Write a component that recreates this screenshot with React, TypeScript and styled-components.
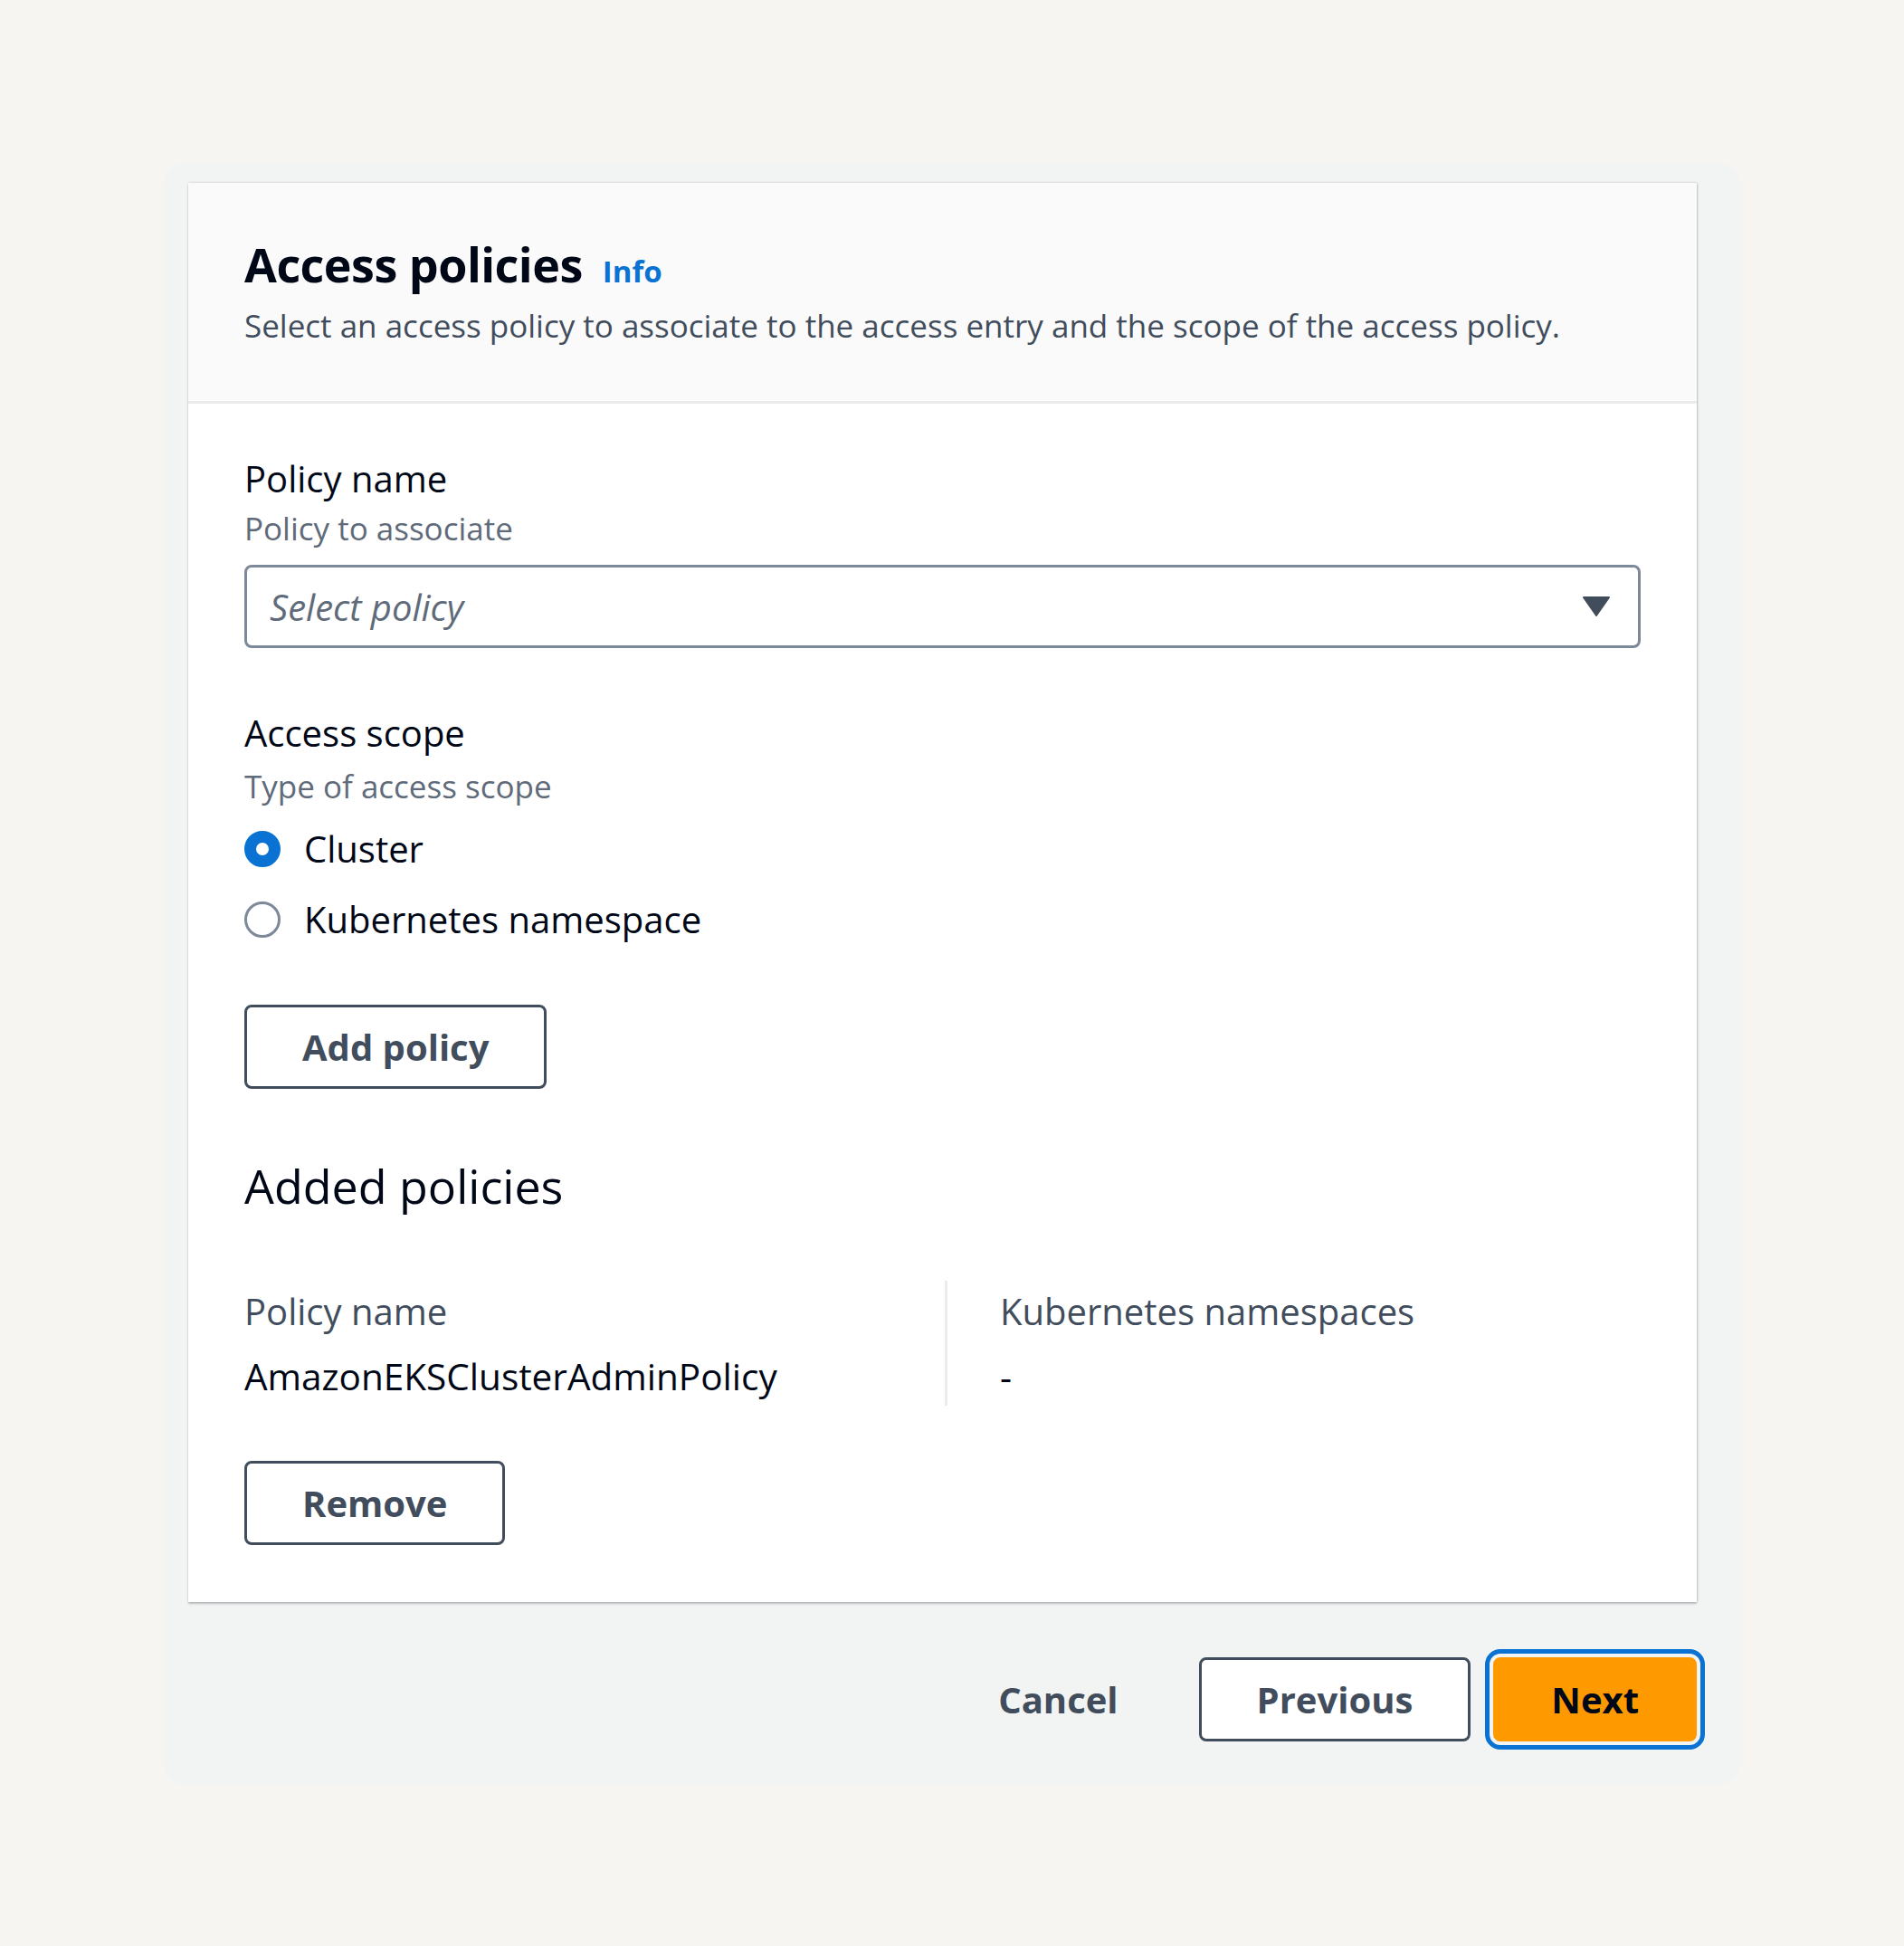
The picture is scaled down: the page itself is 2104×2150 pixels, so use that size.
import React, { useState } from "react";
import styled, { createGlobalStyle } from "styled-components";

const GlobalStyle = createGlobalStyle`
  body {
    margin: 0;
    background: #f7f5f1;
    font-family: "Open Sans", "Noto Sans", sans-serif;
    color: #000716;
  }
  * { box-sizing: border-box; }
`;

type Scope = "cluster" | "namespace";

export default function App() {
  const [scope, setScope] = useState<Scope>("cluster");

  return (
    <Page>
      <GlobalStyle />
      <Frame>
        <Card>
          <CardHeader>
            <TitleRow>
              <Title>Access policies</Title>
              <InfoLink href="#">Info</InfoLink>
            </TitleRow>
            <HeaderDescription>
              Select an access policy to associate to the access entry and the scope of the access policy.
            </HeaderDescription>
          </CardHeader>

          <CardBody>
            <Field>
              <FieldLabel>Policy name</FieldLabel>
              <FieldDescription>Policy to associate</FieldDescription>
              <SelectBox>
                <Placeholder>Select policy</Placeholder>
                <svg width="30" height="22" viewBox="0 0 30 22">
                  <path d="M1 1 H29 L15 21 Z" fill="#414d5c" stroke="#414d5c" strokeWidth="2" strokeLinejoin="round" />
                </svg>
              </SelectBox>
            </Field>

            <Field $top={67}>
              <FieldLabel>Access scope</FieldLabel>
              <FieldDescription $gap={8}>Type of access scope</FieldDescription>
              <RadioGroup>
                <RadioRow onClick={() => setScope("cluster")}>
                  <RadioCircle $checked={scope === "cluster"} />
                  <RadioText>Cluster</RadioText>
                </RadioRow>
                <RadioRow onClick={() => setScope("namespace")}>
                  <RadioCircle $checked={scope === "namespace"} />
                  <RadioText>Kubernetes namespace</RadioText>
                </RadioRow>
              </RadioGroup>
            </Field>

            <Button $top={67}>Add policy</Button>

            <SectionTitle>Added policies</SectionTitle>

            <KeyValueGrid>
              <KeyValueItem>
                <KvLabel>Policy name</KvLabel>
                <KvValue>AmazonEKSClusterAdminPolicy</KvValue>
              </KeyValueItem>
              <KeyValueItem $divider>
                <KvLabel>Kubernetes namespaces</KvLabel>
                <KvValue>-</KvValue>
              </KeyValueItem>
            </KeyValueGrid>

            <Button $top={61}>Remove</Button>
          </CardBody>
        </Card>

        <Footer>
          <LinkButton>Cancel</LinkButton>
          <Button>Previous</Button>
          <Button $primary>Next</Button>
        </Footer>
      </Frame>
    </Page>
  );
}

const Page = styled.div`
  padding: 180px 0 180px 180px;
`;

const Frame = styled.div`
  width: 1744px;
  background: #f2f3f3;
  border-radius: 26px;
  padding: 22px 49px 48px 28px;
`;

const Card = styled.div`
  background: #ffffff;
  box-shadow: 0 2px 2px rgba(0, 7, 22, 0.22), 0 -1px 2px rgba(0, 7, 22, 0.06),
    1px 0 2px rgba(0, 7, 22, 0.12);
`;

const CardHeader = styled.div`
  background: #fafafa;
  padding: 56px 62px 59px;
  border-bottom: 3px solid #e9ebed;
`;

const TitleRow = styled.div`
  display: flex;
  align-items: baseline;
  gap: 22px;
`;

const Title = styled.h2`
  margin: 0;
  font-size: 52px;
  line-height: 68px;
  font-weight: 700;
  color: #000716;
  letter-spacing: -0.5px;
`;

const InfoLink = styled.a`
  font-size: 33px;
  font-weight: 700;
  color: #0972d3;
  text-decoration: none;
`;

const HeaderDescription = styled.p`
  margin: 10px 0 0;
  font-size: 35px;
  line-height: 48px;
  color: #414d5c;
`;

const CardBody = styled.div`
  padding: 56px 62px 63px;
`;

const Field = styled.div<{ $top?: number }>`
  margin-top: ${(p) => p.$top ?? 0}px;
  display: flex;
  flex-direction: column;
`;

const FieldLabel = styled.label`
  font-size: 40px;
  line-height: 54px;
  color: #000716;
`;

const FieldDescription = styled.span<{ $gap?: number }>`
  margin-top: ${(p) => p.$gap ?? 4}px;
  font-size: 35px;
  line-height: 48px;
  color: #5f6b7a;
`;

const SelectBox = styled.div`
  margin-top: 16px;
  height: 92px;
  border: 3px solid #7d8998;
  border-radius: 8px;
  display: flex;
  align-items: center;
  justify-content: space-between;
  padding: 0 31px 0 25px;
  background: #ffffff;
`;

const Placeholder = styled.span`
  font-size: 40px;
  font-style: italic;
  color: #5f6b7a;
`;

const RadioGroup = styled.div`
  margin-top: 18px;
  display: flex;
  flex-direction: column;
  gap: 24px;
`;

const RadioRow = styled.div`
  display: flex;
  align-items: center;
  gap: 26px;
  cursor: pointer;
`;

const RadioCircle = styled.span<{ $checked: boolean }>`
  width: 40px;
  height: 40px;
  border-radius: 50%;
  flex: none;
  border: ${(p) => (p.$checked ? "13px solid #0972d3" : "3px solid #7d8998")};
  background: #ffffff;
`;

const RadioText = styled.span`
  font-size: 40px;
  line-height: 54px;
  color: #000716;
`;

const Button = styled.button<{ $top?: number; $primary?: boolean }>`
  margin-top: ${(p) => p.$top ?? 0}px;
  align-self: flex-start;
  display: block;
  height: 93px;
  padding: 0 61px;
  border-radius: 8px;
  border: 3px solid ${(p) => (p.$primary ? "#ff9900" : "#414d5c")};
  background: ${(p) => (p.$primary ? "#ff9900" : "#ffffff")};
  color: ${(p) => (p.$primary ? "#000716" : "#414d5c")};
  font-family: "Open Sans", "Noto Sans", sans-serif;
  font-size: 40px;
  font-weight: 700;
  cursor: pointer;
  outline: ${(p) => (p.$primary ? "5px solid #0972d3" : "none")};
  outline-offset: 4px;
`;

const SectionTitle = styled.h3`
  margin: 73px 0 0;
  font-size: 52px;
  line-height: 68px;
  font-weight: 400;
  color: #000716;
`;

const KeyValueGrid = styled.div`
  margin-top: 71px;
  display: grid;
  grid-template-columns: 774px 1fr;
`;

const KeyValueItem = styled.div<{ $divider?: boolean }>`
  display: flex;
  flex-direction: column;
  padding: 7px 0 5px ${(p) => (p.$divider ? 58 : 0)}px;
  border-left: ${(p) => (p.$divider ? "3px solid #e9ebed" : "none")};
`;

const KvLabel = styled.span`
  font-size: 40px;
  line-height: 54px;
  color: #414d5c;
`;

const KvValue = styled.span`
  margin-top: 18px;
  font-size: 40.5px;
  line-height: 54px;
  color: #000716;
`;

const Footer = styled.div`
  margin-top: 61px;
  display: flex;
  justify-content: flex-end;
  align-items: center;
  gap: 25px;
`;

const LinkButton = styled.button`
  height: 93px;
  padding: 0 64px;
  border: none;
  background: transparent;
  color: #414d5c;
  font-family: "Open Sans", "Noto Sans", sans-serif;
  font-size: 40px;
  font-weight: 700;
  cursor: pointer;
`;
